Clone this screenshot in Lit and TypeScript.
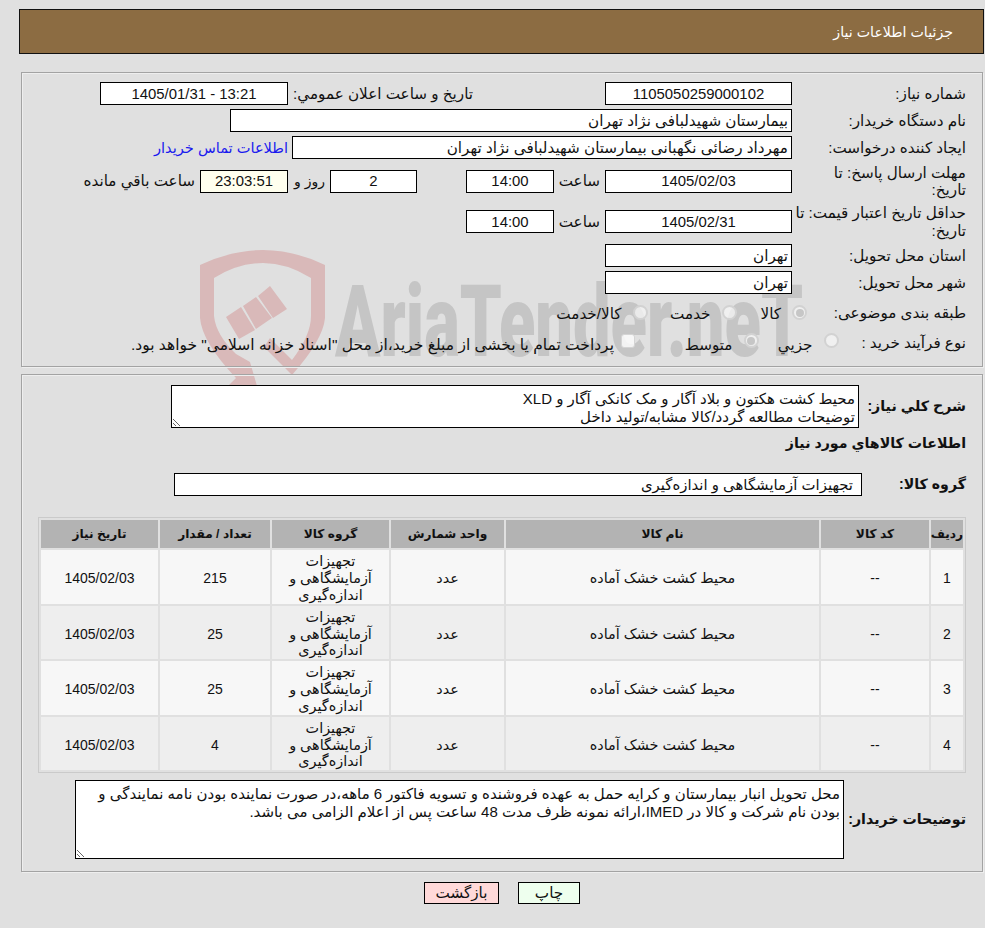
import { LitElement, html, css } from "lit";
import { customElement } from "lit/decorators.js";

const GROUP = "تجهیزات آزمایشگاهی و اندازه‌گیری";
const ROWS = [
  { n: "1", qty: "215" },
  { n: "2", qty: "25" },
  { n: "3", qty: "25" },
  { n: "4", qty: "4" },
];

@customElement("app-root")
export class AppRoot extends LitElement {
  static styles = css`
    :host { display: block; position: relative; width: 985px; height: 928px; background: #e0e0e0; overflow: hidden;
      font-family: "Liberation Sans", "DejaVu Sans", sans-serif; font-size: 15px; color: #111; direction: rtl; }
    * { box-sizing: border-box; }
    .wm { position: absolute; left: 199px; top: 248px; width: 620px; height: 138px; overflow: hidden; direction: ltr; }
    .wm svg { position: absolute; left: 0; top: 0; }
    .wm-text { position: absolute; left: 136px; top: 19px; font: 900 100px/1.1 Roboto, sans-serif; color: #c5c5c5; white-space: nowrap; transform: scaleX(.668); transform-origin: left top; }
    .content { position: relative; padding-top: 9px; height: 928px; }
    header { height: 45px; margin: 0 1px 0 19px; background: #8c6c42; border: 1px solid #111; color: #fff; display: flex; align-items: center; padding-right: 30px; font-size: 14.2px; }
    .panel { border: 1px solid #a3a3a3; box-shadow: inset 1px 1px 0 #eeeeee, 1px 1px 0 #eeeeee; margin: 18px 2px 0 21px; padding: 9px 16px 11px 0; display: flex; flex-direction: column; gap: 4px; }
    .panel.second { margin-top: 7px; padding: 10px 16px 12px 0; gap: 0; }
    .row { display: flex; align-items: center; height: 23px; }
    .row.tall { height: 36px; }
    .row.tall.next { height: 37px; }
    .row.radios { height: 25px; margin-top: 2px; }
    .row.radios2 { height: 25px; margin-top: 1px; }
    .lab { width: 174px; flex: none; font-size: 15.2px; line-height: 17.5px; }
    .lab.r1 { width: 159px; }
    .lab.r2 { width: 127.5px; }
    .box { height: 23px; flex: none; border: 1px solid #000; background: #fff; display: flex; align-items: center; padding: 0 3px; white-space: nowrap; overflow: hidden; font-size: 15.2px; }
    .num { justify-content: center; direction: ltr; font-size: 14.9px; }
    .w187 { width: 187px; } .w188 { width: 188px; } .w562 { width: 562px; } .w500 { width: 500px; } .w88 { width: 88px; } .w87 { width: 87px; }
    .note { background: #ffffee; }
    .t { flex: none; font-size: 15.2px; white-space: nowrap; padding-right: 5px; }
    .gap132 { width: 132px; flex: none; } .gap49 { width: 49px; flex: none; }
    .pubw { width: 185px; padding-right: 0; } .hourw { width: 51px; } .dayw { width: 42px; font-size: 14px; }
    a { color: #1a1aee; text-decoration: none; font-size: 14.6px; padding-right: 4px; white-space: nowrap; }
    .opt { flex: none; display: flex; align-items: center; font-size: 15.2px; white-space: nowrap; }
    .o70 { width: 70.5px; } .o89 { width: 89px; } .o80 { width: 80px; } .o123 { width: 123.5px; }
    .opt span { margin-right: 11px; padding-top: 3px; }
    .radios2 .opt span { padding-top: 5px; }
    .opt.c { font-size: 15.5px; }
    .opt.c span { margin-right: 7px; }
    input { appearance: none; margin: 0; flex: none; width: 15px; height: 15px; background: rgba(245,245,245,.75); border: 2px solid #d2d2d2; border-radius: 50%; position: relative; }
    input.raised { top: -2px; }
    input:checked::after { content: ""; position: absolute; inset: 1.5px; border-radius: 50%; background: #c6c6c6; }
    input[type="checkbox"] { border-radius: 3px; width: 14px; height: 14px; background: rgba(250,250,250,.85); border: 1px solid #d4d4d4; }
    b.lab { font-weight: 700; font-size: 14.2px; }
    textarea { display: block; flex: none; border: 1px solid #000; background: #fff; margin: 0; padding: 4px 3px 0; font: 15px/17.5px "Liberation Sans", "DejaVu Sans", sans-serif; color: #111; direction: rtl; resize: both; overflow: hidden; border-radius: 0; }
    .desc { width: 688px; height: 43px; }
    .note-area { width: 769px; height: 79px; }
    .desc-row { height: 43px; }
    h3 { margin: 6px 0 0; height: 18px; font-size: 14.2px; line-height: 18px; font-weight: 700; }
    .group-row { margin-top: 21px; }
    .w104 { width: 104px; } .w107 { width: 107px; } .w122 { width: 122px; }
    .group { width: 688px; padding-right: 8px; font-size: 14.9px; }
    .tblwrap { margin: 21px 0 0 0; }
    table { width: 928px; table-layout: fixed; border: 1px solid #cacaca; border-spacing: 2px; border-collapse: separate; }
    th { background: #b3b3b3; height: 28px; padding: 0; font-size: 12.2px; font-weight: 700; text-align: center; color: #111; }
    td { height: 53.6px; padding: 3px 4px 0; font-size: 14.4px; line-height: 16.7px; text-align: center; }
    td.n { font-size: 14px; direction: ltr; }
    tr:nth-child(odd) td { background: #f7f7f7; }
    tr:nth-child(even) td { background: #eeeeee; }
    .c1 { width: 32px; } .c2 { width: 108px; } .c3 { width: 313px; } .c4 { width: 113px; } .c5 { width: 117px; } .c6 { width: 110px; } .c7 { width: 117px; }
    .note-row { height: 79px; margin-top: 7px; }
    .btns { display: flex; justify-content: flex-start; gap: 19px; margin: 10px 405px 0 0; }
    button { height: 22px; border: 1px solid #000; border-radius: 0; font: 15.2px "Liberation Sans", "DejaVu Sans", sans-serif; color: #111; padding: 0; }
    .print { width: 62px; background: #eeffee; }
    .back { width: 75px; background: #ffd9d9; }
  `;

  render() {
    return html`
      <div class="wm" aria-hidden="true">
        <svg width="130" height="138" viewBox="199 248 130 138">
          <path fill="#d9b9b9" fill-rule="evenodd" d="M200 265 Q232 250 263 250 Q294 250 325 265 L325 318 Q323 340 292 375 L264 347 L270 338 L292 360 Q311 335 311 316 L311 278 Q287 263 263 263 Q238 263 214 278 L214 316 Q216 335 236 354 L250 362 L257 386 L228 386 L236 378 Q202 342 200 318 Z"/>
          <path fill="#d9b9b9" d="M226 317 L241 307 L255 330 L239 339 Z M243 306 L256 297 L272 318 L256 329 Z M258 296 L270 286 L287 309 L273 318 Z"/>
        </svg>
        <div class="wm-text">AriaTender.neT</div>
      </div>
      <div class="content">
        <header>جزئیات اطلاعات نیاز</header>
        <section class="panel">
          <div class="row">
            <div class="lab">شماره نیاز:</div>
            <div class="box num w187">1105050259000102</div>
            <div class="gap132"></div>
            <div class="t pubw">تاریخ و ساعت اعلان عمومي:</div>
            <div class="box num w188">1405/01/31 - 13:21</div>
          </div>
          <div class="row">
            <div class="lab">نام دستگاه خریدار:</div>
            <div class="box w562">بیمارستان شهیدلبافی نژاد تهران</div>
          </div>
          <div class="row">
            <div class="lab">ایجاد کننده درخواست:</div>
            <div class="box w500">مهرداد رضائی نگهبانی بیمارستان شهیدلبافی نژاد تهران</div>
            <a href="#">اطلاعات تماس خریدار</a>
          </div>
          <div class="row tall">
            <div class="lab">مهلت ارسال پاسخ: تا<br />تاریخ:</div>
            <div class="box num w187">1405/02/03</div>
            <div class="t hourw">ساعت</div>
            <div class="box num w88">14:00</div>
            <div class="gap49"></div>
            <div class="box num w87">2</div>
            <div class="t dayw">روز و</div>
            <div class="box num w88 note">23:03:51</div>
            <div class="t">ساعت باقي مانده</div>
          </div>
          <div class="row tall next">
            <div class="lab">حداقل تاریخ اعتبار قیمت: تا تاریخ:</div>
            <div class="box num w187">1405/02/31</div>
            <div class="t hourw">ساعت</div>
            <div class="box num w88">14:00</div>
          </div>
          <div class="row">
            <div class="lab">استان محل تحویل:</div>
            <div class="box w187">تهران</div>
          </div>
          <div class="row">
            <div class="lab">شهر محل تحویل:</div>
            <div class="box w187">تهران</div>
          </div>
          <div class="row radios">
            <div class="lab r1">طبقه بندی موضوعی:</div>
            <label class="opt o70"><input type="radio" name="kind" checked disabled /><span>کالا</span></label>
            <label class="opt o89"><input type="radio" name="kind" disabled /><span>خدمت</span></label>
            <label class="opt"><input type="radio" name="kind" disabled /><span>کالا/خدمت</span></label>
          </div>
          <div class="row radios2">
            <div class="lab r2">نوع فرآیند خرید :</div>
            <label class="opt o80"><input class="raised" type="radio" name="proc" disabled /><span>جزيي</span></label>
            <label class="opt o123"><input class="raised" type="radio" name="proc" checked disabled /><span>متوسط</span></label>
            <label class="opt c"><input class="raised" type="checkbox" disabled /><span>پرداخت تمام یا بخشی از مبلغ خرید،از محل "اسناد خزانه اسلامی" خواهد بود.</span></label>
          </div>
        </section>
        <section class="panel second">
          <div class="row desc-row">
            <b class="lab w107">شرح کلي نیاز:</b>
            <textarea class="desc" readonly>محیط کشت هکتون و بلاد آگار و مک کانکی آگار و XLD
توضیحات مطالعه گردد/کالا مشابه/تولید داخل</textarea>
          </div>
          <h3>اطلاعات کالاهاي مورد نیاز</h3>
          <div class="row group-row">
            <b class="lab w104">گروه کالا:</b>
            <div class="box group">${GROUP}</div>
          </div>
          <div class="tblwrap">
            <table>
              <thead>
                <tr>
                  <th class="c1">ردیف</th><th class="c2">کد کالا</th><th class="c3">نام کالا</th><th class="c4">واحد شمارش</th>
                  <th class="c5">گروه کالا</th><th class="c6">تعداد / مقدار</th><th class="c7">تاریخ نیاز</th>
                </tr>
              </thead>
              <tbody>
                ${ROWS.map((r) => html`
                  <tr>
                    <td class="n">${r.n}</td><td class="n">--</td><td>محیط کشت خشک آماده</td><td>عدد</td>
                    <td>${GROUP}</td><td class="n">${r.qty}</td><td class="n">1405/02/03</td>
                  </tr>`)}
              </tbody>
            </table>
          </div>
          <div class="row note-row">
            <b class="lab w122">توضیحات خریدار:</b>
            <textarea class="note-area" readonly>محل تحویل انبار بیمارستان و کرایه حمل به عهده فروشنده و تسویه فاکتور 6 ماهه،در صورت نماینده بودن نامه نمایندگی و بودن نام شرکت و کالا در IMED،ارائه نمونه ظرف مدت 48 ساعت پس از اعلام الزامی می باشد.</textarea>
          </div>
        </section>
        <div class="btns">
          <button class="print">چاپ</button>
          <button class="back">بازگشت</button>
        </div>
      </div>
    `;
  }
}
